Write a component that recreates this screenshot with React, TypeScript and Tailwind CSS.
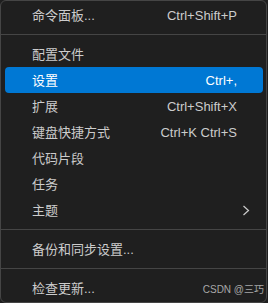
import React from "react";

const font = {
  fontFamily: '"Segoe UI", "Liberation Sans", "Noto Sans CJK SC", sans-serif',
};

type Item = { label: string; shortcut?: string; active?: boolean; sub?: boolean };

function Row({ label, shortcut, active, sub }: Item) {
  return (
    <div
      className={
        "h-[26px] flex items-center justify-between pl-[27px] pr-[26px] rounded-[4px] text-[13px] " +
        (active ? "bg-[#0078d4] text-white" : "text-[#cccccc]")
      }
    >
      <span className="pt-[2px]">{label}</span>
      {shortcut && <span className="pt-[2px]">{shortcut}</span>}
      {sub && (
        <svg width="8" height="11" viewBox="0 0 8 11" className="mr-[-13px]">
          <path d="M1.5 1 L6.5 5.5 L1.5 10" fill="none" stroke="#cccccc" strokeWidth="1.2" />
        </svg>
      )}
    </div>
  );
}

function Sep() {
  return <div className="my-[6px] -mx-1 h-px bg-[#454545]" />;
}

export default function App() {
  return (
    <div className="w-[268px] h-[303px] bg-[#1f1f1f] relative" style={font}>
      <div className="w-[267px] h-[303px] border border-[#454545] rounded-[6px] bg-[#1f1f1f] pt-[1px] pl-1 pr-[3px]">
        <Row label="命令面板..." shortcut="Ctrl+Shift+P" />
        <Sep />
        <Row label="配置文件" />
        <Row label="设置" shortcut="Ctrl+," active />
        <Row label="扩展" shortcut="Ctrl+Shift+X" />
        <Row label="键盘快捷方式" shortcut="Ctrl+K Ctrl+S" />
        <Row label="代码片段" />
        <Row label="任务" />
        <Row label="主题" sub />
        <Sep />
        <Row label="备份和同步设置..." />
        <Sep />
        <Row label="检查更新..." />
      </div>
      <div className="absolute right-[4px] top-[285px] text-[10px] text-[#a8a8a8] leading-none">
        CSDN @三巧
      </div>
    </div>
  );
}
